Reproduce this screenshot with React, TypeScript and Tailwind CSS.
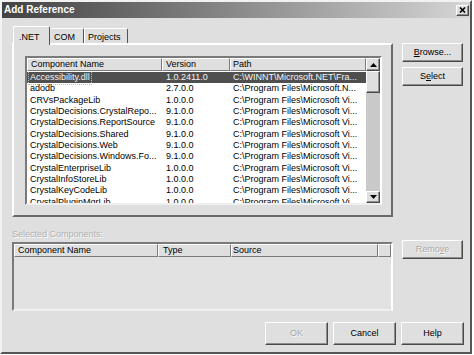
import React from "react";

const rows: Array<[string, string, string]> = [
  ["Accessibility.dll", "1.0.2411.0", "C:\\WINNT\\Microsoft.NET\\Fra..."],
  ["adodb", "2.7.0.0", "C:\\Program Files\\Microsoft.N..."],
  ["CRVsPackageLib", "1.0.0.0", "C:\\Program Files\\Microsoft Vi..."],
  ["CrystalDecisions.CrystalRepo...", "9.1.0.0", "C:\\Program Files\\Microsoft Vi..."],
  ["CrystalDecisions.ReportSource", "9.1.0.0", "C:\\Program Files\\Microsoft Vi..."],
  ["CrystalDecisions.Shared", "9.1.0.0", "C:\\Program Files\\Microsoft Vi..."],
  ["CrystalDecisions.Web", "9.1.0.0", "C:\\Program Files\\Microsoft Vi..."],
  ["CrystalDecisions.Windows.Fo...", "9.1.0.0", "C:\\Program Files\\Microsoft Vi..."],
  ["CrystalEnterpriseLib", "1.0.0.0", "C:\\Program Files\\Microsoft Vi..."],
  ["CrystalInfoStoreLib", "1.0.0.0", "C:\\Program Files\\Microsoft Vi..."],
  ["CrystalKeyCodeLib", "1.0.0.0", "C:\\Program Files\\Microsoft Vi..."],
  ["CrystalPluginMgrLib", "1.0.0.0", "C:\\Program Files\\Microsoft Vi..."],
];

const raised =
  "border border-t-white border-l-white border-r-[#4a4a4a] border-b-[#4a4a4a] shadow-[inset_-1px_-1px_0_#8e8e8e]";

function Button({ children, disabled, className }: { children: React.ReactNode; disabled?: boolean; className: string }) {
  return (
    <div
      className={`${raised} bg-[#dfdfdf] flex items-center justify-center text-[9px] ${
        disabled ? "text-[#a8a8a8] [text-shadow:1px_1px_0_#fafafa]" : "text-black"
      } ${className}`}
    >
      {children}
    </div>
  );
}

function HeaderCell({ label, className }: { label?: string; className: string }) {
  return (
    <div
      className={`h-full bg-[#dfdfdf] border-r border-r-[#7a7a7a] border-b border-b-[#7a7a7a] border-t border-t-white border-l border-l-white flex items-center text-[9px] text-black whitespace-nowrap overflow-hidden ${className}`}
    >
      {label}
    </div>
  );
}

function Arrow({ up }: { up?: boolean }) {
  return (
    <svg width="7" height="4" viewBox="0 0 7 4">
      {up ? <polygon points="0,4 7,4 3.5,0" fill="#000" /> : <polygon points="0,0 7,0 3.5,4" fill="#000" />}
    </svg>
  );
}

export default function App() {
  return (
    <div className="w-[474px] h-[355px] bg-white font-['Liberation_Sans',Arial,sans-serif]">
      <div className="w-[472px] h-[354px] border-2 border-t-[#f2f2f2] border-l-[#f2f2f2] border-r-[#555] border-b-[#555] bg-[#dfdfdf] flex flex-col">
        {/* title bar */}
        <div className="h-[16px] flex items-center justify-between bg-gradient-to-r from-[#434343] via-[#8a8a8a] to-[#d6d6d6] pl-[2px] pr-[1px]">
          <span className="text-white font-bold text-[10px] leading-none">Add Reference</span>
          <div className={`${raised} w-[13px] h-[11px] bg-[#dfdfdf] flex items-center justify-center`}>
            <svg width="7" height="6" viewBox="0 0 7 6">
              <path d="M1 0.5 L6 5.5 M6 0.5 L1 5.5" stroke="#000" strokeWidth="1.6" />
            </svg>
          </div>
        </div>

        <div className="flex-1 pl-[10px] pt-[8px]">
          {/* top section */}
          <div className="flex">
            <div className="w-[381px]">
              <div className="h-[17px] flex items-end pl-[1px] relative z-10">
                <div className="h-[19px] -mb-[2px] w-[37px] bg-[#dfdfdf] border-t border-l border-t-white border-l-white border-r border-r-[#555] rounded-t-[2px] flex items-start pt-[4px] pl-[5px] text-[9px]">
                  .NET
                </div>
                <div className="h-[15px] w-[34px] bg-[#dfdfdf] border-t border-t-white border-r border-r-[#555] rounded-t-[2px] flex items-start pt-[2px] pl-[4px] text-[9px]">
                  COM
                </div>
                <div className="h-[15px] w-[44px] bg-[#dfdfdf] border-t border-l border-t-white border-l-white border-r border-r-[#555] rounded-t-[2px] flex items-start pt-[2px] pl-[3px] text-[9px]">
                  Projects
                </div>
              </div>
              <div className="h-[174px] border-2 border-t-white border-l-white border-r-[#6a6a6a] border-b-[#6a6a6a] pl-[11px] pt-[11px]">
                <div className="w-[357px] h-[149px] border-2 border-t-[#7a7a7a] border-l-[#7a7a7a] border-r-white border-b-[#efefef] bg-white flex">
                  <div className="w-[339px] h-full flex flex-col overflow-hidden">
                    <div className="h-[13px] flex shrink-0">
                      <HeaderCell label="Component Name" className="w-[135px] pl-[3px]" />
                      <HeaderCell label="Version" className="w-[68px] pl-[3px]" />
                      <HeaderCell label="Path" className="w-[136px] pl-[2px]" />
                    </div>
                    <div className="flex-1 overflow-hidden pt-[1px]">
                      {rows.map((r, i) => (
                        <div
                          key={r[0]}
                          className={`h-[11.33px] flex items-center text-[9px] whitespace-nowrap ${
                            i === 0 ? "bg-[#4f4f4f] text-[#f4f4f4]" : "text-black"
                          }`}
                        >
                          <div className="w-[135px] pl-[2px] h-full flex items-center">
                            <span className={`px-[1px] ${i === 0 ? "outline outline-1 outline-dotted outline-[#bbb]" : ""}`}>{r[0]}</span>
                          </div>
                          <div className="w-[68px] pl-[4px]">{r[1]}</div>
                          <div className="w-[136px] pl-[3px] overflow-hidden">{r[2]}</div>
                        </div>
                      ))}
                    </div>
                  </div>
                  {/* scrollbar */}
                  <div className="w-[14px] h-full flex flex-col bg-[#c9c9c9]">
                    <div className={`${raised} h-[13px] bg-[#dfdfdf] flex items-center justify-center`}>
                      <Arrow up />
                    </div>
                    <div className={`${raised} h-[22px] bg-[#dfdfdf]`} />
                    <div className="flex-1" />
                    <div className={`${raised} h-[12px] bg-[#dfdfdf] flex items-center justify-center`}>
                      <Arrow />
                    </div>
                  </div>
                </div>
              </div>
            </div>
            <div className="ml-[9px] mt-[17px] w-[61px] flex flex-col gap-[5px]">
              <Button className="h-[19px]">
                <span>
                  <span className="underline">B</span>rowse...
                </span>
              </Button>
              <Button className="h-[19px]">
                <span>
                  S<span className="underline">e</span>lect
                </span>
              </Button>
            </div>
          </div>

          {/* selected components */}
          <div className="flex mt-[11px]">
            <div className="w-[381px]">
              <div className="h-[14px] text-[9px] leading-[12px] text-[#b0b0b0] [text-shadow:1px_1px_0_#fafafa]">
                Selected Components:
              </div>
              <div className="h-[69px] border-2 border-t-[#7a7a7a] border-l-[#7a7a7a] border-r-white border-b-[#efefef] bg-[#e2e2e2]">
                <div className="h-[13px] flex">
                  <HeaderCell label="Component Name" className="w-[144px] pl-[3px]" />
                  <HeaderCell label="Type" className="w-[73px] pl-[4px]" />
                  <HeaderCell label="Source" className="w-[147px] pl-[1px]" />
                  <HeaderCell className="w-[13px]" />
                </div>
              </div>
            </div>
            <div className="ml-[9px] mt-[12px] w-[61px]">
              <Button disabled className="h-[19px]">
                <span>
                  Remo<span className="underline">v</span>e
                </span>
              </Button>
            </div>
          </div>

          {/* bottom buttons */}
          <div className="flex gap-[5px] mt-[11px] ml-[253px]">
            <Button disabled className="w-[63px] h-[23px]">
              OK
            </Button>
            <Button className="w-[63px] h-[23px]">Cancel</Button>
            <Button className="w-[63px] h-[23px]">Help</Button>
          </div>
        </div>
      </div>
    </div>
  );
}
